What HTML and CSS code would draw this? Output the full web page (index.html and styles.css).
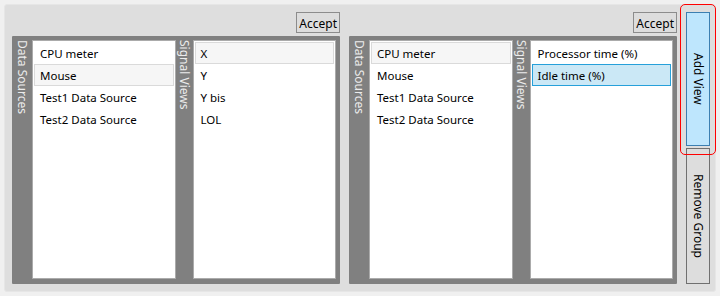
FILE: index.html
```html
<!DOCTYPE html>
<html>
<head>
<meta charset="utf-8">
<link rel="stylesheet" href="styles.css">
</head>
<body>
<div class="window">
  <div class="frame">
    <div class="group">
      <div class="toolbar"><button class="btn">Accept</button></div>
      <div class="panel">
        <div class="vlabel first">Data Sources</div>
        <ul class="list">
          <li class="item">CPU meter</li>
          <li class="item inactive">Mouse</li>
          <li class="item">Test1 Data Source</li>
          <li class="item">Test2 Data Source</li>
        </ul>
        <div class="vlabel second">Signal Views</div>
        <ul class="list">
          <li class="item inactive">X</li>
          <li class="item">Y</li>
          <li class="item">Y bis</li>
          <li class="item">LOL</li>
        </ul>
      </div>
    </div>
    <div class="group">
      <div class="toolbar"><button class="btn">Accept</button></div>
      <div class="panel">
        <div class="vlabel first">Data Sources</div>
        <ul class="list">
          <li class="item inactive">CPU meter</li>
          <li class="item">Mouse</li>
          <li class="item">Test1 Data Source</li>
          <li class="item">Test2 Data Source</li>
        </ul>
        <div class="vlabel second">Signal Views</div>
        <ul class="list">
          <li class="item">Processor time (%)</li>
          <li class="item selected">Idle time (%)</li>
        </ul>
      </div>
    </div>
    <div class="actions">
      <div class="focus-wrap">
        <button class="vbtn hot"><span>Add View</span></button>
        <div class="focus-ring"></div>
      </div>
      <button class="vbtn"><span>Remove Group</span></button>
    </div>
  </div>
</div>
</body>
</html>
```
FILE: styles.css
```css
html, body {
  margin: 0;
  padding: 0;
  background: #f0f0f0;
  font-family: "Noto Sans", "Open Sans", sans-serif;
  font-size: 11.5px;
  color: #000;
}
.window {
  padding: 4px;
  width: 720px;
  height: 296px;
  box-sizing: border-box;
}
.frame {
  box-sizing: border-box;
  width: 712px;
  height: 288px;
  background: #dedede;
  border: 1px solid #e6e6e6;
  border-radius: 3px;
  padding: 7px 5px 7px 7px;
  display: flex;
  gap: 9px;
}
.group {
  flex: 1 1 0;
  display: flex;
  flex-direction: column;
  gap: 3px;
  min-width: 0;
}
.toolbar {
  display: flex;
  justify-content: flex-end;
  height: 21px;
}
.btn {
  font: inherit;
  font-size: 12px;
  color: #000;
  background: #dddddd;
  border: 1px solid #8c8c8c;
  padding: 1px 2px 0;
  height: 21px;
  line-height: 17px;
  margin: 0;
}
.panel {
  flex: 1;
  background: #808080;
  display: flex;
  padding: 4px 4px 5px 0;
  border-radius: 1px;
}
.vlabel {
  writing-mode: vertical-rl;
  color: #ececec;
  font-size: 12px;
  line-height: 14px;
  display: flex;
  align-items: center;
}
.vlabel.first { width: 20px; }
.vlabel.second { width: 17px; }
.list {
  flex: 1 1 0;
  min-width: 0;
  margin: 0;
  padding: 1px;
  list-style: none;
  background: #fff;
  border: 1px solid #ababab;
}
.item {
  height: 22px;
  box-sizing: border-box;
  border: 1px solid transparent;
  padding: 1px 5px 0;
  line-height: 19px;
  white-space: nowrap;
}
.item.inactive {
  background: #f6f6f6;
  border-color: #dadada;
}
.item.selected {
  background: #cbe8f6;
  border-color: #26a0da;
}
.actions {
  width: 24px;
  display: flex;
  flex-direction: column;
  gap: 2px;
}
.focus-wrap {
  position: relative;
  flex: 1 1 0;
  display: flex;
}
.vbtn {
  flex: 1 1 0;
  margin: 0;
  padding: 0;
  font: inherit;
  font-size: 12px;
  color: #000;
  background: #dddddd;
  border: 1px solid #707070;
  display: flex;
  align-items: center;
  justify-content: center;
}
.vbtn span {
  writing-mode: vertical-rl;
}
.vbtn.hot {
  background: #bee6fd;
  border-color: #3c7fb1;
}
.focus-ring {
  position: absolute;
  left: -6px;
  right: -6px;
  top: -8px;
  bottom: -9px;
  border: 1px solid #ff0000;
  border-radius: 5px;
  pointer-events: none;
}
```
